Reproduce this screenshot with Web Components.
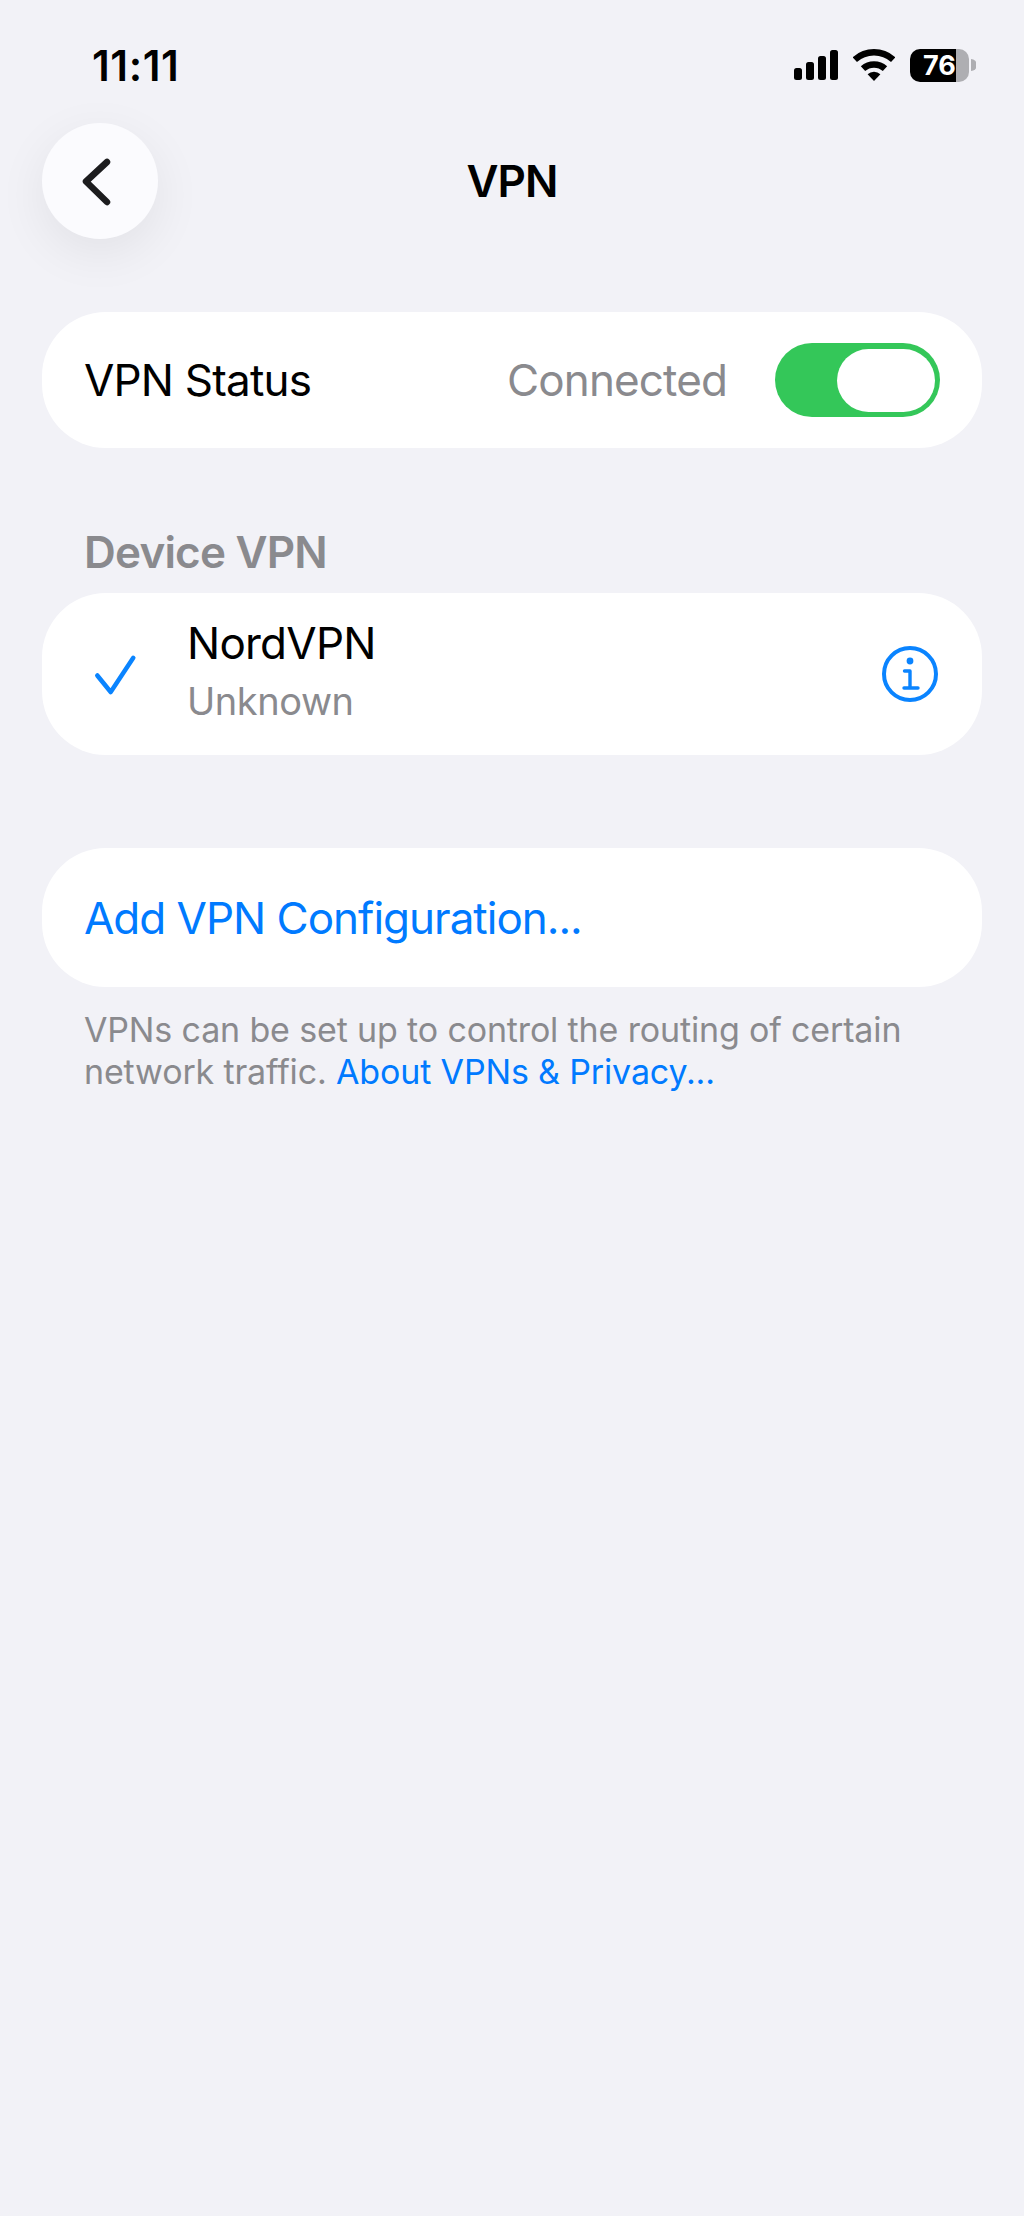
<!DOCTYPE html>
<html lang="en">
<head>
<meta charset="utf-8">
<title>VPN</title>
<style>
  html, body { margin: 0; background: #f2f2f7; }
  body { font-family: Inter, "Liberation Sans", sans-serif; }
</style>
</head>
<body>
<vpn-app>
  <status-bar time="11:11" battery="76"></status-bar>
  <nav-bar title="VPN"></nav-bar>

  <settings-card height="136">
    <span style="font-size:var(--fs-body);letter-spacing:-.8px;color:#000">VPN Status</span>
    <span slot="end" style="font-size:var(--fs-body);letter-spacing:-.88px;color:#8a8a8e">Connected</span>
    <toggle-switch slot="end"></toggle-switch>
  </settings-card>

  <section-header>Device VPN</section-header>
  <settings-card height="162">
    <vpn-row name="NordVPN" status="Unknown"></vpn-row>
  </settings-card>

  <settings-card height="139" gap="93">
    <span style="font-size:var(--fs-body);letter-spacing:-1px;color:#007aff">Add VPN Configuration...</span>
  </settings-card>
  <footer-note>
    <div>VPNs can be set up to control the routing of certain</div>
    <div>network traffic. <a>About VPNs &amp; Privacy...</a></div>
  </footer-note>
</vpn-app>

<script>
// root screen, just a column on the grey background
class VpnApp extends HTMLElement {
  constructor() {
    super();
    this.attachShadow({ mode: "open" });
    this.shadowRoot.innerHTML = `
      <style>
        :host {
          display: block;
          height: 2216px;
          background: #f2f2f7;
          overflow: hidden;
          --fs-body: 44px;
        }
      </style>
      <slot></slot>`;
  }
}

class StatusBar extends HTMLElement {
  constructor() {
    super();
    this.attachShadow({ mode: "open" });
    this.shadowRoot.innerHTML = `
      <style>
        :host {
          display: flex;
          align-items: center;
          justify-content: space-between;
          box-sizing: border-box;
          height: 123px;
          padding: 7px 48px 0 92px;
        }
        #time { font-size: 42px; font-weight: 600; letter-spacing: .6px; color: #000; }
        #icons { display: flex; align-items: center; }
        svg { display: block; }
        #wifi { margin-left: 15px; }
        #batt {
          margin-left: 15px;
          width: 59px;
          height: 33px;
          border-radius: 10px;
          background: linear-gradient(90deg, #000 46px, #aeaeb2 46px);
          color: #fff;
          font-size: 27px;
          font-weight: 700;
          line-height: 33px;
          padding-left: 13px;
          box-sizing: border-box;
          white-space: nowrap;
        }
        #cap { margin-left: 2px; }
      </style>
      <span id="time"></span>
      <div id="icons">
        <svg width="44" height="30" viewBox="0 0 44 30" fill="#000">
          <rect x="0" y="18" width="8" height="12" rx="2.5"/>
          <rect x="12" y="12" width="8" height="18" rx="2.5"/>
          <rect x="24" y="6" width="8" height="24" rx="2.5"/>
          <rect x="36" y="0" width="8" height="30" rx="2.5"/>
        </svg>
        <svg id="wifi" width="42" height="32" viewBox="0 0 42 32" fill="none" stroke="#000" stroke-width="6.5">
          <path d="M1.8 10.7A28.7 28.7 0 0 1 40.2 10.7"/>
          <path d="M10 19.7A16.5 16.5 0 0 1 32 19.7"/>
          <path d="M21 32L14.6 25.3A9 9 0 0 1 27.4 25.3Z" fill="#000" stroke="none"/>
        </svg>
        <div id="batt"></div>
        <svg id="cap" width="5" height="12" viewBox="0 0 5 12"><path d="M0 0A6 6 0 0 1 0 12Z" fill="#aeaeb2"/></svg>
      </div>`;
  }
  connectedCallback() {
    this.shadowRoot.querySelector("#time").textContent = this.getAttribute("time");
    this.shadowRoot.querySelector("#batt").textContent = this.getAttribute("battery");
  }
}

class NavBar extends HTMLElement {
  constructor() {
    super();
    this.attachShadow({ mode: "open" });
    this.shadowRoot.innerHTML = `
      <style>
        :host {
          display: grid;
          grid-template-columns: 1fr auto 1fr;
          align-items: center;
          padding: 0 42px;
        }
        #back {
          width: 116px;
          height: 116px;
          border-radius: 50%;
          background: #fbfbfe;
          box-shadow: 0 14px 50px rgba(0, 0, 0, .07);
          display: flex;
          align-items: center;
          justify-content: center;
        }
        svg { display: block; }
        h1 {
          margin: 0;
          font-size: 44px;
          font-weight: 600;
          letter-spacing: -1px;
          color: #000;
        }
      </style>
      <div id="back">
        <svg width="116" height="116" viewBox="0 0 116 116" fill="none" stroke="#1c1c1e" stroke-width="6.5" stroke-linecap="round" stroke-linejoin="round">
          <path d="M65 39L44 58.5L65 79"/>
        </svg>
      </div>
      <h1></h1>
      <div></div>`;
  }
  connectedCallback() {
    this.shadowRoot.querySelector("h1").textContent = this.getAttribute("title");
  }
}

class SettingsCard extends HTMLElement {
  constructor() {
    super();
    this.attachShadow({ mode: "open" });
    this.shadowRoot.innerHTML = `
      <style>
        :host {
          display: flex;
          align-items: center;
          justify-content: space-between;
          box-sizing: border-box;
          margin: 73px 42px 0;
          padding: 0 42px;
          background: #fff;
          border-radius: 64px;
        }
        #end { display: flex; align-items: center; gap: 48px; }
        ::slotted(vpn-row) { flex: 1; }
      </style>
      <slot></slot>
      <div id="end"><slot name="end"></slot></div>`;
  }
  connectedCallback() {
    this.style.height = this.getAttribute("height") + "px";
    if (this.hasAttribute("gap")) this.style.marginTop = this.getAttribute("gap") + "px";
  }
}

class ToggleSwitch extends HTMLElement {
  constructor() {
    super();
    this.attachShadow({ mode: "open" });
    this.shadowRoot.innerHTML = `
      <style>
        :host {
          display: flex;
          justify-content: flex-end;
          align-items: center;
          box-sizing: border-box;
          width: 165px;
          height: 74px;
          padding-right: 5px;
          border-radius: 37px;
          background: #34c759;
        }
        #knob { width: 98px; height: 63px; border-radius: 32px; background: #fff; }
      </style>
      <div id="knob"></div>`;
  }
}

class SectionHeader extends HTMLElement {
  constructor() {
    super();
    this.attachShadow({ mode: "open" });
    this.shadowRoot.innerHTML = `
      <style>
        :host {
          display: block;
          margin: 80px 84px 0;
          height: 65px;
          font-size: 44px;
          font-weight: 600;
          letter-spacing: -.8px;
          line-height: 48px;
          color: #8a8a8e;
        }
      </style>
      <slot></slot>`;
  }
  connectedCallback() {
    // the next card sits close under the header
    const next = this.nextElementSibling;
    if (next) next.style.marginTop = "0";
  }
}

class VpnRow extends HTMLElement {
  constructor() {
    super();
    this.attachShadow({ mode: "open" });
    this.shadowRoot.innerHTML = `
      <style>
        :host {
          display: grid;
          grid-template-columns: 62px 1fr auto;
          align-items: center;
        }
        svg { display: block; }
        #text { margin-left: 41px; padding-bottom: 9px; }
        #name { font-size: 44px; letter-spacing: -.75px; line-height: 56px; color: #000; }
        #status { font-size: 38px; letter-spacing: -.45px; line-height: 48px; color: #8a8a8e; margin-top: 6px; }
      </style>
      <svg width="62" height="60" viewBox="0 0 62 60" fill="none" stroke="#0a84ff" stroke-width="4.5" stroke-linecap="round" stroke-linejoin="round">
        <path d="M13.3 31.5L26.7 48L49.3 13.8"/>
      </svg>
      <div id="text"><div id="name"></div><div id="status"></div></div>
      <svg width="60" height="60" viewBox="0 0 60 60" fill="none" stroke="#0a84ff" stroke-linecap="round" stroke-linejoin="round">
        <circle cx="30" cy="30" r="26" stroke-width="4"/>
        <circle cx="30" cy="17" r="3.4" fill="#0a84ff" stroke="none"/>
        <path d="M24.5 27H30V44M24 44H38" stroke-width="3.4"/>
      </svg>`;
  }
  connectedCallback() {
    this.shadowRoot.querySelector("#name").textContent = this.getAttribute("name");
    this.shadowRoot.querySelector("#status").textContent = this.getAttribute("status");
  }
}

class FooterNote extends HTMLElement {
  constructor() {
    super();
    this.attachShadow({ mode: "open" });
    this.shadowRoot.innerHTML = `
      <style>
        :host {
          display: block;
          margin: 22px 60px 0 84px;
          font-size: 34px;
          line-height: 42px;
          letter-spacing: -.15px;
          color: #8a8a8e;
        }
      </style>
      <slot></slot>`;
  }
  connectedCallback() {
    // link colour, the <a> is nested so ::slotted can't reach it
    this.querySelectorAll("a").forEach((a) => (a.style.color = "#007aff"));
  }
}

customElements.define("vpn-app", VpnApp);
customElements.define("status-bar", StatusBar);
customElements.define("nav-bar", NavBar);
customElements.define("settings-card", SettingsCard);
customElements.define("toggle-switch", ToggleSwitch);
customElements.define("section-header", SectionHeader);
customElements.define("vpn-row", VpnRow);
customElements.define("footer-note", FooterNote);
</script>
</body>
</html>
